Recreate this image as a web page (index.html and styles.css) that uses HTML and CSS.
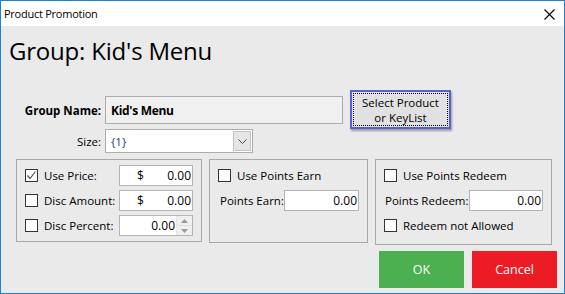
FILE: index.html
```html
<!DOCTYPE html>
<html>
<head>
<meta charset="utf-8">
<link rel="stylesheet" href="styles.css">
</head>
<body>
<div class="window">
  <div class="titlebar">
    <span class="title">Product Promotion</span>
    <svg class="close" width="11" height="11" viewBox="0 0 11 11"><path d="M0.5 0.5L10.5 10.5M10.5 0.5L0.5 10.5" stroke="#000" stroke-width="1.1" fill="none"/></svg>
  </div>
  <div class="content">
    <h1 class="heading">Group: Kid's Menu</h1>
    <div class="top">
      <div class="form">
        <label class="lbl bold">Group Name:</label>
        <div class="field name">Kid's Menu</div>
        <label class="lbl">Size:</label>
        <div class="combo">
          <span class="combo-val">{1}</span>
          <span class="combo-btn"><svg width="9" height="5" viewBox="0 0 9 5"><path d="M0.5 0.5L4.5 4.5L8.5 0.5" stroke="#444" fill="none"/></svg></span>
        </div>
      </div>
      <div class="select-btn"><div class="focus">Select Product<br>or KeyList</div></div>
    </div>
    <div class="groups">
      <div class="group g1">
        <div class="row">
          <span class="cb"><svg width="11" height="11" viewBox="0 0 11 11"><path d="M1.5 5.5L4 8.5L9.5 1.5" stroke="#555" stroke-width="1.2" fill="none"/></svg></span>
          <span class="cb-lbl">Use Price:</span>
          <div class="num"><span>$</span><span>0.00</span></div>
        </div>
        <div class="row">
          <span class="cb"></span>
          <span class="cb-lbl">Disc Amount:</span>
          <div class="num"><span>$</span><span>0.00</span></div>
        </div>
        <div class="row">
          <span class="cb"></span>
          <span class="cb-lbl">Disc Percent:</span>
          <div class="num spin"><span class="v">0.00</span>
            <span class="spinner">
              <span class="arr"><svg width="7" height="4" viewBox="0 0 7 4"><path d="M0 4L3.5 0L7 4Z" fill="#9a9a9a"/></svg></span>
              <span class="arr"><svg width="7" height="4" viewBox="0 0 7 4"><path d="M0 0L3.5 4L7 0Z" fill="#9a9a9a"/></svg></span>
            </span>
          </div>
        </div>
      </div>
      <div class="group g2">
        <div class="row">
          <span class="cb"></span>
          <span class="cb-lbl">Use Points Earn</span>
        </div>
        <div class="row">
          <span class="plbl">Points Earn:</span>
          <div class="num w75"><span></span><span>0.00</span></div>
        </div>
      </div>
      <div class="group g3">
        <div class="row">
          <span class="cb"></span>
          <span class="cb-lbl">Use Points Redeem</span>
        </div>
        <div class="row">
          <span class="plbl p1">Points Redeem:</span>
          <div class="num"><span></span><span>0.00</span></div>
        </div>
        <div class="row">
          <span class="cb"></span>
          <span class="cb-lbl">Redeem not Allowed</span>
        </div>
      </div>
    </div>
    <div class="actions">
      <button class="btn ok">OK</button>
      <button class="btn cancel">Cancel</button>
    </div>
  </div>
</div>
</body>
</html>
```

FILE: styles.css
```css
* { box-sizing: border-box; }
html, body { margin: 0; padding: 0; }
body {
  font-family: "Open Sans", "Noto Sans", sans-serif;
  font-size: 11.5px;
  color: #000;
  background: #fff;
}
.window {
  width: 565px;
  height: 294px;
  border: 1px solid #1883d7;
  display: flex;
  flex-direction: column;
  background: #eaeaea;
}
.titlebar {
  height: 25px;
  background: #fff;
  display: flex;
  align-items: center;
  justify-content: space-between;
  padding: 0 9px 0 3px;
}
.title {
  font-size: 11px;
  letter-spacing: -0.25px;
  line-height: 25px;
}
.close { margin-top: 1px; }
.content {
  flex: 1;
  display: flex;
  flex-direction: column;
  padding: 10px 7px 0 8px;
}
.heading {
  margin: 0;
  font-weight: normal;
  font-size: 24px;
  line-height: 30px;
  letter-spacing: -0.2px;
}
.top {
  margin: 24px 0 0 7px;
  display: flex;
  align-items: flex-start;
}
.form {
  margin-top: 6px;
  display: grid;
  grid-template-columns: 85px auto;
  column-gap: 4px;
  row-gap: 5px;
  align-items: center;
}
.lbl { text-align: right; }
.bold { font-weight: bold; }
.field.name {
  width: 238px;
  height: 28px;
  border: 1px solid #adadad;
  background: #f0f0f0;
  font-weight: bold;
  font-size: 12px;
  letter-spacing: -0.3px;
  display: flex;
  align-items: center;
  padding-left: 5px;
}
.combo {
  width: 148px;
  height: 24px;
  border: 1px solid #adadad;
  background: #fff;
  display: flex;
  align-items: stretch;
  justify-content: space-between;
}
.combo-val {
  padding-left: 5px;
  display: flex;
  align-items: center;
  color: #1a3a8a;
}
.combo-btn {
  width: 18px;
  margin: 1px;
  background: #e5e5e5;
  border: 1px solid #c4c4c4;
  display: flex;
  align-items: center;
  justify-content: center;
}
.select-btn {
  margin-left: 7px;
  width: 101px;
  height: 39px;
  border: 2px solid #5a5fd6;
  background: #e1e1e1;
  padding: 1px;
  box-shadow: 1px 2px 2px rgba(0,0,0,0.35);
}
.focus {
  height: 100%;
  border: 1px dotted #000;
  text-align: center;
  line-height: 15px;
  font-size: 11.5px;
  padding-top: 1px;
}
.groups {
  margin: 6px 0 0 7px;
  display: flex;
  align-items: flex-start;
  gap: 7px;
}
.group {
  border: 1px solid #a9a9a9;
  padding: 5px 8px;
  display: flex;
  flex-direction: column;
  gap: 4px;
}
.g1 { width: 186px; height: 83px; }
.g2 { width: 159px; height: 84px; }
.g3 { width: 177px; height: 86px; }
.row {
  height: 21px;
  display: flex;
  align-items: center;
}
.cb {
  width: 13px;
  height: 13px;
  border: 1px solid #333;
  background: #fff;
  display: inline-flex;
  align-items: center;
  justify-content: center;
  flex-shrink: 0;
}
.cb-lbl { margin-left: 6px; }
.num {
  margin-left: auto;
  width: 74px;
  height: 21px;
  border: 1px solid #b4b4b4;
  background: #fff;
  display: flex;
  align-items: center;
  justify-content: space-between;
  padding: 0 1px 0 17px;
  font-size: 12px;
}
.num.w75 { width: 75px; }
.num.spin { padding: 0; justify-content: flex-end; }
.num.spin .v { margin-right: 1px; }
.spinner {
  width: 16px;
  height: 19px;
  display: flex;
  flex-direction: column;
  border-left: 1px solid #e6e6e6;
}
.arr {
  flex: 1;
  display: flex;
  align-items: center;
  justify-content: center;
  background: #f0f0f0;
}
.arr + .arr { border-top: 1px solid #dcdcdc; }
.plbl { margin-left: 2px; }
.plbl.p1 { margin-left: 1px; }
.actions {
  margin-top: 6px;
  display: flex;
  justify-content: flex-end;
  gap: 8px;
}
.btn {
  width: 85px;
  height: 37px;
  border: none;
  color: #fff;
  font-family: "Open Sans", "Noto Sans", sans-serif;
  font-size: 12.5px;
  padding: 0;
}
.ok { background: #4caf50; }
.cancel { background: #ed1c24; }
```
